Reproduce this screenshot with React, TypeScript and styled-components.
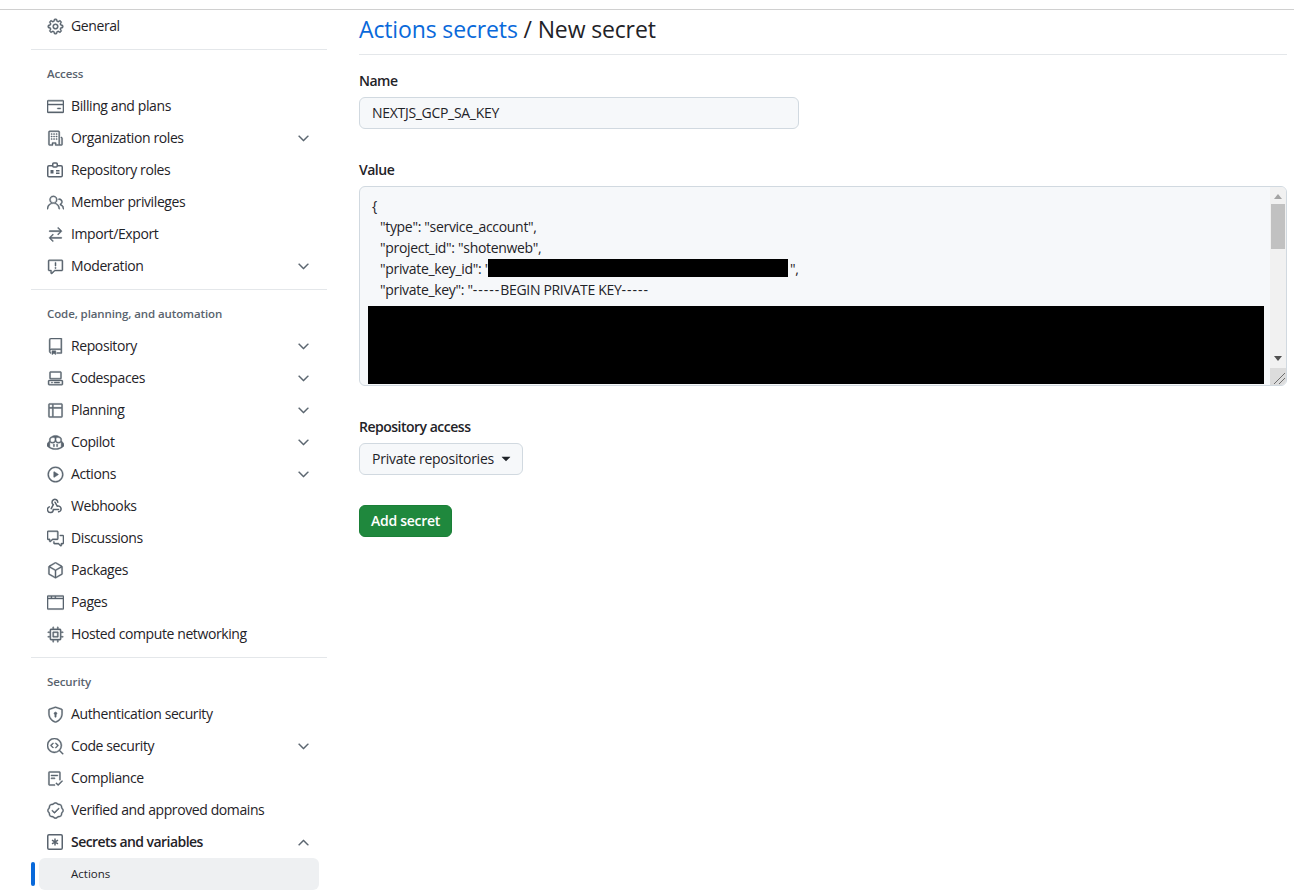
import React from "react";
import styled, { createGlobalStyle } from "styled-components";
import {
  GoGear, GoCreditCard, GoOrganization, GoPeople, GoArrowSwitch, GoReport,
  GoRepo, GoCodespaces, GoTable, GoCopilot, GoPlay, GoCommentDiscussion,
  GoPackage, GoBrowser, GoCpu, GoShieldLock, GoCodescan, GoChecklist, GoVerified,
  GoChevronDown, GoChevronUp, GoTriangleDown,
} from "react-icons/go";

const GlobalStyle = createGlobalStyle`
  html, body {
    margin: 0;
    background: #fff;
    color: #1f2328;
    font-family: "Open Sans", "Noto Sans", sans-serif;
    font-size: 14px;
  }
`;

const Page = styled.div`
  height: 895px;
  overflow: hidden;
`;

const TopRule = styled.div`
  height: 9px;
  border-bottom: 1px solid #d0d0d0;
`;

const Layout = styled.div`
  display: flex;
  padding-left: 31px;
`;

const Sidebar = styled.nav`
  width: 296px;
  flex-shrink: 0;
`;

const Group = styled.div`
  padding-bottom: 7px;
  border-bottom: 1px solid #e4e7ea;
  &:last-child {
    border-bottom: 0;
  }
`;

const GroupTitle = styled.div`
  padding: 16px 16px 8px;
  font-size: 11.5px;
  line-height: 16px;
  font-weight: 600;
  letter-spacing: -0.1px;
  color: #59636e;
`;

const RowWrap = styled.div`
  position: relative;
  margin: 0 8px;
`;

const Row = styled.a<{ $bold?: boolean }>`
  display: flex;
  align-items: center;
  gap: 8px;
  height: 32px;
  padding: 0 8px;
  color: #1f2328;
  font-weight: ${(p) => (p.$bold ? 600 : 400)};
  letter-spacing: ${(p) => (p.$bold ? -0.55 : -0.4)}px;
  white-space: nowrap;
`;

const RowIcon = styled.span`
  display: flex;
  width: 16px;
  height: 16px;
  color: #59636e;

  /* the Go set is drawn on a 24 grid, so thicken it to the 16px octicon weight */
  svg[fill="currentColor"] {
    flex-shrink: 0;
    width: 17px;
    height: 17px;
    margin: -0.5px;
    stroke-width: 0.6;
  }
`;

const RowLabel = styled.span`
  flex: 1;
  padding-bottom: 2px;
`;

const SubRow = styled.a`
  display: flex;
  align-items: center;
  box-sizing: border-box;
  height: 32px;
  padding: 0 0 2px 32px;
  border-radius: 6px;
  background: #eef0f2;
  color: #1f2328;
  font-size: 11.5px;
`;

const ActiveBar = styled.span`
  position: absolute;
  left: -8px;
  top: 4px;
  width: 4px;
  height: 24px;
  border-radius: 6px;
  background: #0969da;
`;

const Main = styled.main`
  width: 928px;
  margin-left: 32px;
  flex-shrink: 0;
`;

const Header = styled.h1`
  margin: 0 0 16px;
  height: 44px;
  line-height: 38px;
  border-bottom: 1px solid #e4e7ea;
  font-size: 23px;
  font-weight: 400;
  letter-spacing: -0.14px;
`;

const HeaderLink = styled.a`
  color: #0969da;
`;

const Field = styled.div`
  margin-bottom: 31px;
`;

const AccessField = styled(Field)`
  margin-bottom: 30px;
`;

const Label = styled.label`
  display: block;
  margin-bottom: 6px;
  line-height: 20px;
  font-weight: 600;
  letter-spacing: -0.5px;
`;

const NameInput = styled.div`
  box-sizing: border-box;
  width: 440px;
  height: 32px;
  padding: 0 12px;
  line-height: 30px;
  border: 1px solid #d1d9e0;
  border-radius: 6px;
  background: #f6f8fa;
  letter-spacing: -0.3px;
`;

const ValueBox = styled.div`
  position: relative;
  box-sizing: border-box;
  height: 200px;
  overflow: hidden;
  padding: 8px 12px;
  border: 1px solid #d1d9e0;
  border-radius: 6px;
  background: #f6f8fa;
  line-height: 21px;
  letter-spacing: -0.32px;
`;

const CodeLine = styled.div<{ $indent?: boolean }>`
  height: 21px;
  white-space: pre;
  padding-left: ${(p) => (p.$indent ? 8 : 0)}px;
`;

const Dashes = styled.span`
  letter-spacing: 1px;
`;

const InlineRedaction = styled.span`
  display: inline-block;
  vertical-align: top;
  width: 300px;
  height: 18px;
  margin: 1px 2px 0 -2px;
  background: #000;
`;

const BlockRedaction = styled.div`
  width: 896px;
  height: 78px;
  margin: 6px 0 0 -4px;
  background: #000;
`;

const ScrollTrack = styled.div`
  position: absolute;
  top: 0;
  right: 0;
  bottom: 0;
  width: 16px;
  background: #f1f1f1;
`;

const ScrollArrow = styled.svg<{ $down?: boolean; $dark?: boolean }>`
  position: absolute;
  left: 4px;
  top: ${(p) => (p.$down ? 169 : 7)}px;
  color: ${(p) => (p.$dark ? "#505050" : "#a3a3a3")};
`;

const ScrollThumb = styled.div`
  position: absolute;
  top: 17px;
  left: 1px;
  width: 14px;
  height: 45px;
  background: #c1c1c1;
`;

const ResizeCorner = styled.svg`
  position: absolute;
  right: 0;
  bottom: 0;
  background: #dcdcdc;
  color: #6e6e6e;
`;

const SelectButton = styled.button`
  display: flex;
  align-items: center;
  gap: 4px;
  box-sizing: border-box;
  width: 164px;
  height: 32px;
  padding: 0 0 2px 12px;
  border: 1px solid #d1d9e0;
  border-radius: 6px;
  background: #f6f8fa;
  color: #1f2328;
  font: inherit;
  font-weight: 500;
  letter-spacing: -0.25px;
  white-space: nowrap;

  svg {
    flex-shrink: 0;
    margin-top: 2px;
  }
`;

const SubmitButton = styled.button`
  display: block;
  box-sizing: border-box;
  width: 93px;
  height: 32px;
  padding: 0 0 2px;
  border: 1px solid #1a7f37;
  border-radius: 6px;
  background: #1f883d;
  color: #fff;
  font: inherit;
  font-weight: 600;
  letter-spacing: -0.3px;
`;

type IconProps = { size?: number };

const IdBadgeIcon = ({ size = 16 }: IconProps) => (
  <svg width={size} height={size} viewBox="0 0 16 16" fill="none" stroke="currentColor" strokeWidth="1.5">
    <path d="M5.5 3.75H2a1.25 1.25 0 0 0-1.25 1.25v8.5A1.25 1.25 0 0 0 2 14.75h12a1.25 1.25 0 0 0 1.25-1.25V5A1.25 1.25 0 0 0 14 3.75h-3.5" />
    <rect x="5.75" y="1" width="4.5" height="4" rx="1" />
    <rect x="3.5" y="8" width="3" height="3.5" fill="currentColor" stroke="none" />
    <path d="M9 8.75h3.5M9 11.25h3.5" />
  </svg>
);

const WebhookIcon = ({ size = 16 }: IconProps) => (
  <svg width={size} height={size} viewBox="0 0 16 16" fill="none" stroke="currentColor" strokeWidth="1.5" strokeLinecap="round">
    <path d="M10.8 4.2A2.9 2.9 0 1 0 6.3 6.7L4.2 10.7" />
    <path d="M8 4.2l2.2 4a2.9 2.9 0 1 1 1.4 5.6" />
    <path d="M11.6 11.5H6.3a2.9 2.9 0 1 1-4-2.6" />
  </svg>
);

const KeyAsteriskIcon = ({ size = 16 }: IconProps) => (
  <svg width={size} height={size} viewBox="0 0 16 16" fill="none" stroke="currentColor" strokeWidth="1.5">
    <rect x="0.75" y="0.75" width="14.5" height="14.5" rx="1.25" />
    <path d="M8 4.5v7M5 6.2l6 3.6M11 6.2L5 9.8" />
  </svg>
);

type Item = { icon: React.ComponentType<IconProps>; label: string; caret?: boolean };

const access: Item[] = [
  { icon: GoCreditCard, label: "Billing and plans" },
  { icon: GoOrganization, label: "Organization roles", caret: true },
  { icon: IdBadgeIcon, label: "Repository roles" },
  { icon: GoPeople, label: "Member privileges" },
  { icon: GoArrowSwitch, label: "Import/Export" },
  { icon: GoReport, label: "Moderation", caret: true },
];

const code: Item[] = [
  { icon: GoRepo, label: "Repository", caret: true },
  { icon: GoCodespaces, label: "Codespaces", caret: true },
  { icon: GoTable, label: "Planning", caret: true },
  { icon: GoCopilot, label: "Copilot", caret: true },
  { icon: GoPlay, label: "Actions", caret: true },
  { icon: WebhookIcon, label: "Webhooks" },
  { icon: GoCommentDiscussion, label: "Discussions" },
  { icon: GoPackage, label: "Packages" },
  { icon: GoBrowser, label: "Pages" },
  { icon: GoCpu, label: "Hosted compute networking" },
];

const security: Item[] = [
  { icon: GoShieldLock, label: "Authentication security" },
  { icon: GoCodescan, label: "Code security", caret: true },
  { icon: GoChecklist, label: "Compliance" },
  { icon: GoVerified, label: "Verified and approved domains" },
];

const NavRow = ({ item }: { item: Item }) => (
  <RowWrap>
    <Row>
      <RowIcon><item.icon size={16} /></RowIcon>
      <RowLabel>{item.label}</RowLabel>
      {item.caret && <RowIcon><GoChevronDown size={16} /></RowIcon>}
    </Row>
  </RowWrap>
);

const App: React.FC = () => (
  <Page>
    <GlobalStyle />
    <TopRule />
    <Layout>
      <Sidebar>
        <Group>
          <NavRow item={{ icon: GoGear, label: "General" }} />
        </Group>
        <Group>
          <GroupTitle>Access</GroupTitle>
          {access.map((item) => <NavRow key={item.label} item={item} />)}
        </Group>
        <Group>
          <GroupTitle>Code, planning, and automation</GroupTitle>
          {code.map((item) => <NavRow key={item.label} item={item} />)}
        </Group>
        <Group>
          <GroupTitle>Security</GroupTitle>
          {security.map((item) => <NavRow key={item.label} item={item} />)}
          <RowWrap>
            <Row $bold>
              <RowIcon><KeyAsteriskIcon size={16} /></RowIcon>
              <RowLabel>Secrets and variables</RowLabel>
              <RowIcon><GoChevronUp size={16} /></RowIcon>
            </Row>
          </RowWrap>
          <RowWrap>
            <ActiveBar />
            <SubRow>Actions</SubRow>
          </RowWrap>
        </Group>
      </Sidebar>
      <Main>
        <Header>
          <HeaderLink>Actions secrets</HeaderLink> / New secret
        </Header>
        <Field>
          <Label>Name</Label>
          <NameInput>NEXTJS_GCP_SA_KEY</NameInput>
        </Field>
        <Field>
          <Label>Value</Label>
          <ValueBox>
            <CodeLine>{"{"}</CodeLine>
            <CodeLine $indent>"type": "service_account",</CodeLine>
            <CodeLine $indent>"project_id": "shotenweb",</CodeLine>
            <CodeLine $indent>"private_key_id": "<InlineRedaction />",</CodeLine>
            <CodeLine $indent>"private_key": "<Dashes>-----</Dashes>BEGIN PRIVATE KEY<Dashes>-----</Dashes></CodeLine>
            <BlockRedaction />
            <ScrollTrack>
              <ScrollArrow width="8" height="5" viewBox="0 0 8 5">
                <path d="M4 0L8 5H0z" fill="currentColor" />
              </ScrollArrow>
              <ScrollThumb />
              <ScrollArrow $down $dark width="8" height="5" viewBox="0 0 8 5">
                <path d="M0 0H8L4 5z" fill="currentColor" />
              </ScrollArrow>
              <ResizeCorner width="16" height="17" viewBox="0 0 16 17">
                <path d="M4 16L15 5M9 16L15 10" stroke="currentColor" strokeWidth="1" fill="none" />
              </ResizeCorner>
            </ScrollTrack>
          </ValueBox>
        </Field>
        <AccessField>
          <Label>Repository access</Label>
          <SelectButton>Private repositories <GoTriangleDown size={16} /></SelectButton>
        </AccessField>
        <SubmitButton>Add secret</SubmitButton>
      </Main>
    </Layout>
  </Page>
);

export default App;
